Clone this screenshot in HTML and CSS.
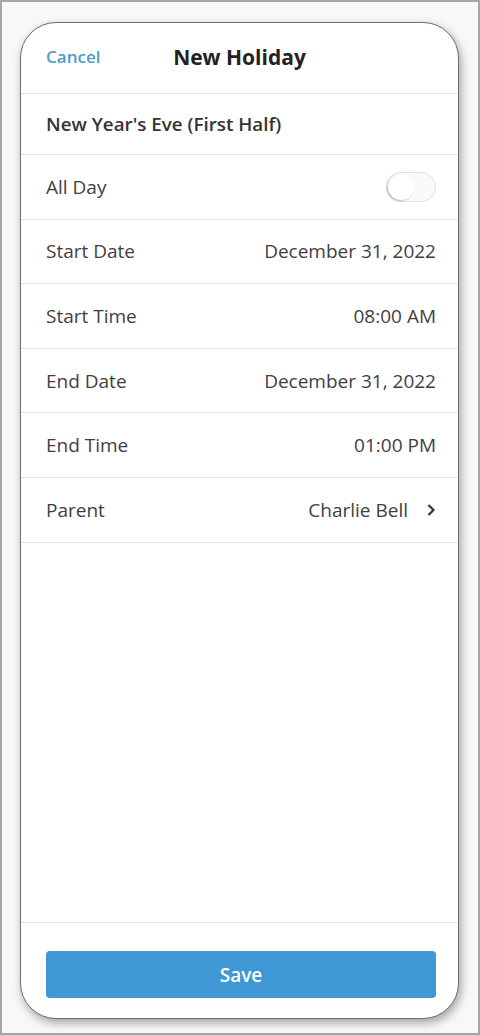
FILE: index.html
```html
<!DOCTYPE html>
<html lang="en">
<head>
    <meta charset="UTF-8">
    <meta name="viewport" content="width=device-width, initial-scale=1.0">
    <link rel="stylesheet" href="styles.css">
    <title>New Holiday</title>
</head>
<body>
    <div class="frame">
        <div class="phone">
            <header class="nav">
                <a class="cancel" href="#">Cancel</a>
                <h1>New Holiday</h1>
            </header>
            <div class="row title-row">New Year's Eve (First Half)</div>
            <div class="row">
                <span class="label">All Day</span>
                <span class="toggle"><span class="knob"></span></span>
            </div>
            <div class="row">
                <span class="label">Start Date</span>
                <span class="value">December 31, 2022</span>
            </div>
            <div class="row">
                <span class="label">Start Time</span>
                <span class="value">08:00 AM</span>
            </div>
            <div class="row">
                <span class="label">End Date</span>
                <span class="value">December 31, 2022</span>
            </div>
            <div class="row">
                <span class="label">End Time</span>
                <span class="value">01:00 PM</span>
            </div>
            <div class="row">
                <span class="label">Parent</span>
                <span class="value link">Charlie Bell
                    <svg width="10" height="14" viewBox="0 0 10 14"><path d="M2.5 2 L7.5 7 L2.5 12" fill="none" stroke="#333" stroke-width="2.2"/></svg>
                </span>
            </div>
            <div class="spacer"></div>
            <footer class="actions">
                <button class="save">Save</button>
            </footer>
        </div>
    </div>
</body>
</html>
```

FILE: styles.css
```css
/* Global */
body {
    margin: 0;
    font-family: 'Open Sans', sans-serif;
    color: #333;
}

.frame {
    box-sizing: border-box;
    width: 480px;
    height: 1035px;
    border: 2px solid #a6a6a6;
    background-color: #f8f8f8;
    padding: 20px 0 0 18px;
}

/* Phone card */
.phone {
    box-sizing: border-box;
    width: 439px;
    height: 997px;
    border: 1.5px solid #6d6d6d;
    border-radius: 36px;
    background-color: #fff;
    box-shadow: 2px 4px 10px rgba(0, 0, 0, 0.35);
    display: flex;
    flex-direction: column;
    overflow: hidden;
}

.nav {
    height: 70px;
    flex-shrink: 0;
    display: flex;
    align-items: center;
    justify-content: center;
    position: relative;
    border-bottom: 1px solid #e3e3e3;
}

.nav h1 {
    margin: 0;
    font-size: 21px;
    font-weight: 700;
    color: #222;
    margin-top: -2px;
}

.cancel {
    position: absolute;
    left: 25px;
    top: 22px;
    color: #4c9dcb;
    font-size: 17px;
    font-weight: 600;
    text-decoration: none;
}

.row {
    height: 63.6px;
    flex-shrink: 0;
    padding: 0 22px 0 25px;
    display: flex;
    align-items: center;
    justify-content: space-between;
    border-bottom: 1px solid #e3e3e3;
    font-size: 19px;
}

.title-row {
    height: 60px;
    font-size: 18.8px;
    font-weight: 600;
    color: #333;
}

.label {
    color: #3f3f3f;
}

.value {
    color: #3f3f3f;
}

.link {
    display: flex;
    align-items: center;
    gap: 18px;
}

.toggle {
    box-sizing: border-box;
    width: 50px;
    height: 30px;
    border: 1px solid #e2e2e2;
    border-radius: 15px;
    background-color: #fafafa;
    display: flex;
    align-items: center;
    padding: 1px;
}

.knob {
    width: 26px;
    height: 26px;
    border-radius: 50%;
    background-color: #fff;
    box-shadow: -1px 1px 2px rgba(0, 0, 0, 0.25);
}

.spacer {
    flex: 1;
}

.actions {
    box-sizing: border-box;
    flex-shrink: 0;
    border-top: 1px solid #e3e3e3;
    padding: 28px 22px 0 25px;
    height: 96px;
}

.save {
    display: block;
    width: 100%;
    height: 47px;
    border: none;
    border-radius: 4px;
    background-color: #3f97d6;
    color: #fff;
    font-family: 'Open Sans', sans-serif;
    font-size: 19px;
    font-weight: 600;
}
```
